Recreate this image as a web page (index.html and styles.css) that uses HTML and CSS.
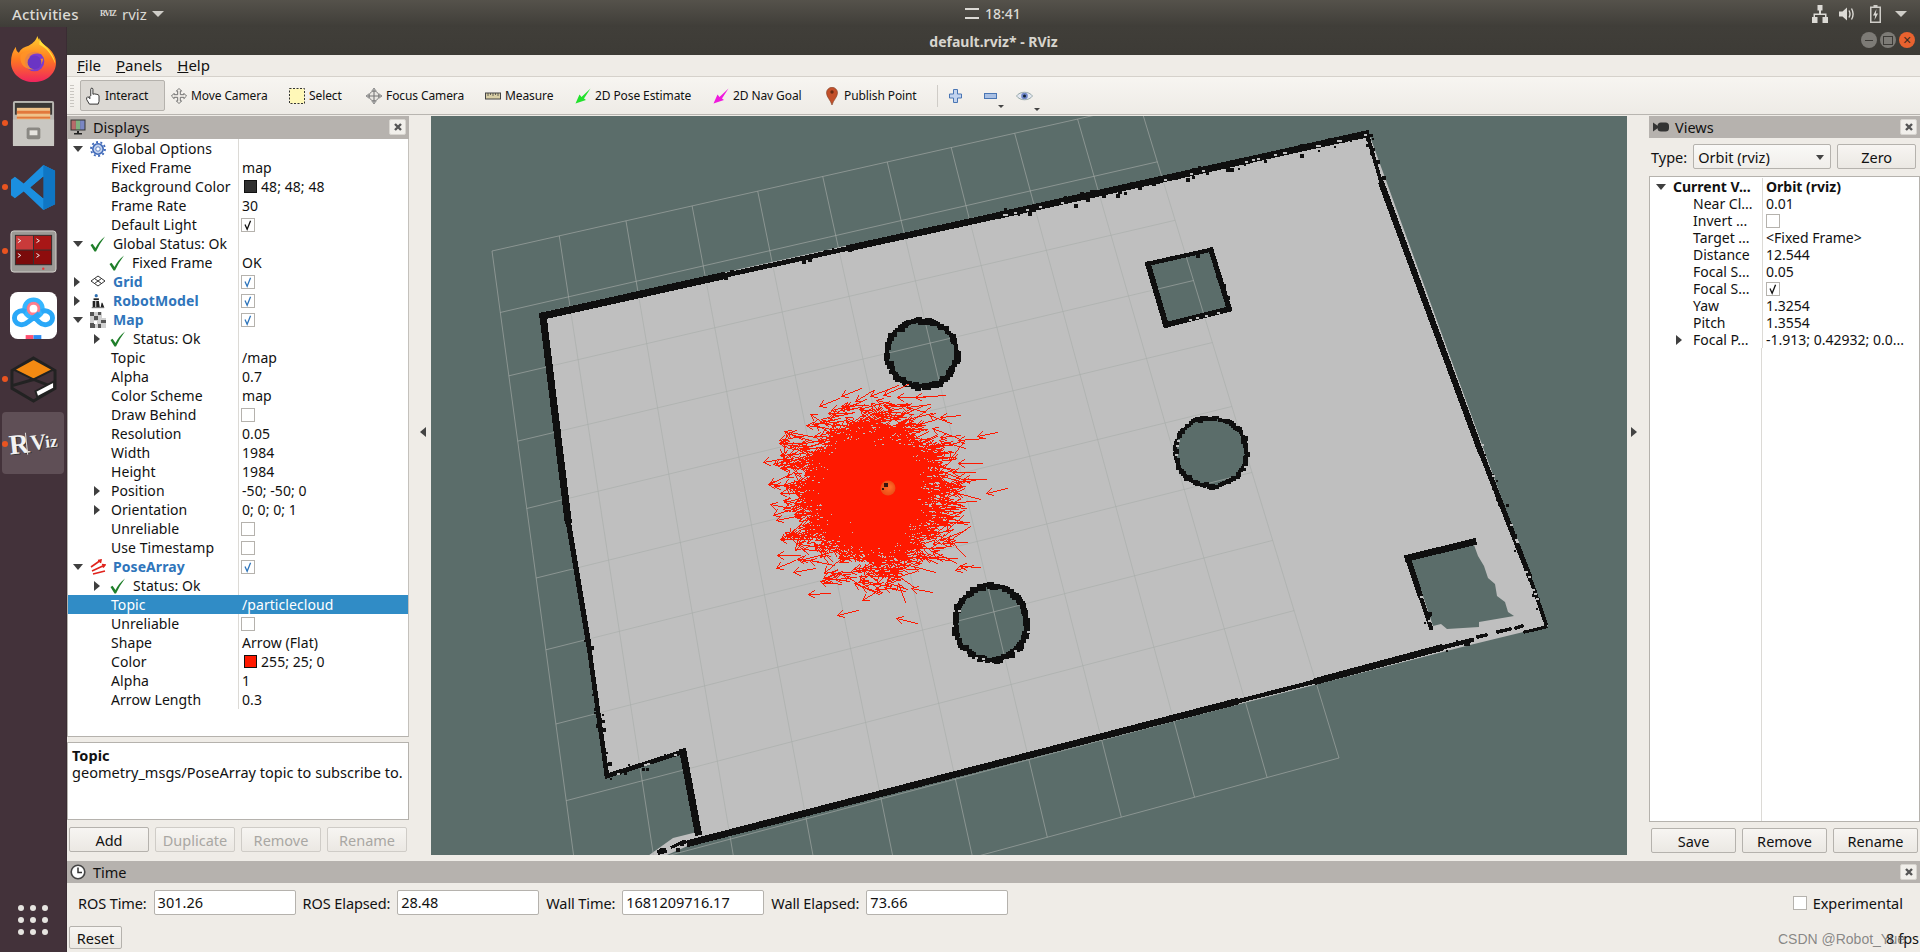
FILE: index.html
```html
<!DOCTYPE html>
<html lang="en">
<head>
<meta charset="utf-8">
<title>default.rviz* - RViz</title>
<link rel="stylesheet" href="styles.css">
</head>
<body>
<svg class="defs" width="0" height="0" aria-hidden="true">
  <defs>
    <symbol id="chk" viewBox="0 0 14 14"><path d="M3.5 6.5 L6 12 L10 2" fill="none" stroke="currentColor" stroke-width="1.5"/></symbol>
    <symbol id="ok" viewBox="0 0 18 18"><path d="M1.5 10 L3.5 8.8 L6.5 13 Q10 6 16 1.5 Q11 8 7 16.5 L5.5 16.5 Z" fill="#1f7f2a"/></symbol>
    <symbol id="gear" viewBox="0 0 16 16"><circle cx="8" cy="8" r="5.2" fill="#c4d3ee" stroke="#3e68b8" stroke-width="1.6"/><circle cx="8" cy="8" r="7" fill="none" stroke="#3e68b8" stroke-width="1.8" stroke-dasharray="2 2.4"/><circle cx="8" cy="8" r="2.2" fill="#fff" stroke="#5a7fc4"/></symbol>
    <symbol id="gridic" viewBox="0 0 16 16"><path d="M8 2 L15 7 L8 12 L1 7 Z M4.5 4.5 L11.5 9.5 M11.5 4.5 L4.5 9.5" fill="#fff" stroke="#333" stroke-width="1"/></symbol>
    <symbol id="robot" viewBox="0 0 16 18"><circle cx="6" cy="3" r="1.8" fill="#2f6fb0"/><path d="M3 6h6v2H3z" fill="#222"/><path d="M2 16V9h3v7zM6 16V9h3l1 7zM11 16l1-5 1 0 2 5" fill="#222"/><path d="M1 16.5h14" stroke="#555"/></symbol>
    <symbol id="mapic" viewBox="0 0 16 16"><rect width="16" height="16" fill="#d0d0d0"/><path d="M0 0h4v4H0zM8 0h3v3H8zM4 4h4v4H4zM11 8h5v3h-5zM0 11h5v5H0zM8 12h3v4H8z" fill="#555"/><path d="M12 0h4v6h-4zM4 9h3v3H4z" fill="#fff"/></symbol>
    <symbol id="poseic" viewBox="0 0 16 16"><path d="M1 8 L11 1 M8 1.5l3-.5-.6 3M2 12 L15 6 M12 5.5l3 .5-2 2.5M3 15 L15 12" fill="none" stroke="#e0231c" stroke-width="1.6"/></symbol>
    <symbol id="mon" viewBox="0 0 16 16"><rect x=".5" y=".5" width="15" height="11" fill="#333"/><rect x="1.5" y="1.5" width="4.4" height="9" fill="#b76a6a"/><rect x="5.9" y="1.5" width="4.2" height="9" fill="#7fb07f"/><rect x="10.1" y="1.5" width="4.4" height="9" fill="#7a86c4"/><path d="M7 12h2v2h3v1.500H4V14h3z" fill="#222"/></symbol>
    <symbol id="clock" viewBox="0 0 16 16"><circle cx="8" cy="8" r="6.8" fill="#fff" stroke="#444" stroke-width="1.6"/><path d="M8 3.500V8.500H12" fill="none" stroke="#333" stroke-width="1.500"/></symbol>
    <symbol id="cam" viewBox="0 0 16 12"><path d="M0 1.500L5 5V7L0 10.500Z" fill="#333"/><rect x="4.500" y="1.500" width="11.500" height="9" rx="3.500" fill="#333"/></symbol>
    <symbol id="x" viewBox="0 0 10 10"><path d="M2 2 L8 8 M8 2 L2 8" stroke="#555" stroke-width="2.400"/></symbol>
    <symbol id="hand" viewBox="0 0 17 20"><path d="M6 10V2.500a1.200 1.200 0 0 1 2.400 0V8l1.800-.3 1.800.3 2 .5 1.200 1V16l-1 3H4.500L1.500 14v-2l1-1 1.500.500L5 13V10" fill="#fff" stroke="#222"/></symbol>
    <symbol id="movecam" viewBox="0 0 18 18"><path d="M9 0.500 L12 3.500H10.500V7.500H14.500V6L17.500 9 14.500 12V10.500H10.500V14.500H12L9 17.500 6 14.500H7.500V10.500H3.500V12L.5 9 3.500 6V7.500H7.500V3.500H6Z" fill="#f1eee9" stroke="#666"/></symbol>
    <symbol id="selic" viewBox="0 0 16 16"><rect x=".5" y=".5" width="15" height="15" fill="#fff8b8" stroke="#333" stroke-dasharray="2 1.500"/></symbol>
    <symbol id="focus" viewBox="0 0 18 18"><circle cx="9" cy="9" r="5.500" fill="#e8e6e2" stroke="#777"/><path d="M9 0V18M0 9H18" stroke="#777" stroke-width="1.200"/><path d="M9 0l2.500 3h-5zM9 18l2.500-3h-5zM0 9l3-2.500v5zM18 9l-3-2.500v5z" fill="#aaa" stroke="#777" stroke-width=".5"/></symbol>
    <symbol id="ruler" viewBox="0 0 16 8"><rect x=".5" y="1" width="15" height="6" fill="#d9cfa6" stroke="#444"/><path d="M3 1v3M5.500 1v2M8 1v3M10.500 1v2M13 1v3" stroke="#444" stroke-width=".8"/></symbol>
    <symbol id="pose" viewBox="0 0 16 16"><path d="M0.500 15.500 L4.500 6.500 L6.500 9 L15.500 .5 L9 10.500 L11 12 Z" fill="#22e12c"/></symbol>
    <symbol id="nav" viewBox="0 0 16 16"><path d="M0.500 15.500 L4.500 6.500 L6.500 9 L15.500 .5 L9 10.500 L11 12 Z" fill="#ef19dd"/></symbol>
    <symbol id="pin" viewBox="0 0 12 18"><path d="M6 18 C4.500 13 .5 10 .5 5.800 A5.500 5.500 0 0 1 11.500 5.800 C11.500 10 7.500 13 6 18Z" fill="#c2502a" stroke="#7d3a1e" stroke-width=".6"/><circle cx="6" cy="5" r="1.700" fill="#6b2c14"/></symbol>
    <symbol id="plus" viewBox="0 0 13 14"><path d="M4.500.5h4v4.500h4v4h-4v4.500h-4V9h-4V5h4z" fill="#c2d3ee" stroke="#4a76b4"/></symbol>
    <symbol id="minus" viewBox="0 0 13 6"><rect x=".5" y=".5" width="12" height="5" fill="#a9c0e4" stroke="#4a76b4"/></symbol>
    <symbol id="eye" viewBox="0 0 17 12"><path d="M.5 6C4 1 13 1 16.500 6 13 11 4 11 .5 6Z" fill="#e4e8f1" stroke="#9aa"/><circle cx="8.500" cy="6" r="3.300" fill="#6f86c8"/><circle cx="8.500" cy="6" r="1.500" fill="#123"/></symbol>
    <symbol id="net" viewBox="0 0 16 18"><path d="M5.500 0h5v5.500H9V8.500h5.500V12H16v6h-5.500v-6H13V10H3v2h2.500v6H0v-6h1.500V8.500H7V5.500H5.500Z" fill="#dcdad5"/></symbol>
    <symbol id="vol" viewBox="0 0 16 16"><path d="M0 5.500h3.500L8 1.500v13L3.500 10.500H0Z" fill="#dcdad5"/><path d="M10 4.500q2 3.500 0 7M12.500 2.500q3.200 5.500 0 11" fill="none" stroke="#dcdad5" stroke-width="1.400"/></symbol>
    <symbol id="bat" viewBox="0 0 11 18"><path d="M3.500 0h4v1.500H11V18H0V1.500h3.500Z M1.500 3V16.500h8V3Z" fill="#cfcdc8" fill-rule="evenodd"/><path d="M6.500 4 L3 10.500h2.200L4.500 15 8 8.500H5.800Z" fill="#dcdad5"/></symbol>
  </defs>
</svg>

<div class="screen">
  <header class="topbar">
    <div class="top-left">
      <span class="activities">Activities</span>
      <span class="app-logo">RVIZ</span>
      <span class="app-name">rviz</span>
      <span class="tri tri-top"></span>
    </div>
    <div class="top-clock"><span class="notif"></span><span>18:41</span></div>
    <div class="top-right">
      <svg class="s-net"><use href="#net"/></svg>
      <svg class="s-vol"><use href="#vol"/></svg>
      <svg class="s-bat"><use href="#bat"/></svg>
      <span class="tri tri-top"></span>
    </div>
  </header>

  <div class="below">
    <nav class="dock">
      <div class="dock-item"><svg class="dock-svg" viewBox="0 0 48 48">
        <defs><linearGradient id="ff" x1="0" y1="0" x2="0" y2="1"><stop offset="0" stop-color="#ffd030"/><stop offset=".5" stop-color="#ff7a1f"/><stop offset="1" stop-color="#f0245e"/></linearGradient></defs>
        <path d="M28 0c1 6 8 9 12 13 4 4 7 9 7 14 0 12-10 20-23 20S1 38 1 27C1 20 3 15 6 11c0 3 1 5 3 6 2-4 6-6 10-7 3-2 7-4 9-10Z" fill="url(#ff)"/>
        <path d="M30 2c2 6 8 9 11 14 3 4 5 8 5 12-4-10-9-16-16-19Z" fill="#ffe03a"/>
        <circle cx="25" cy="26" r="10" fill="#7b3ccf"/><path d="M11 19c6-5 16-6 22 0-5-2-10-1-13 2 1 3 7 3 14 2-1 8-8 12-14 11-6-1-11-7-9-15Z" fill="#ff9327" opacity=".85"/>
        <circle cx="25" cy="27" r="7" fill="#6a35c4"/></svg></div>
      <div class="dock-item"><i class="run"></i><svg class="dock-svg" viewBox="0 0 48 48">
        <rect x="3" y="1" width="42" height="46" rx="2" fill="#b9b7b2"/><rect x="5" y="3" width="38" height="12" fill="#3a3836"/>
        <rect x="7" y="8" width="34" height="12" fill="#f0c28a"/><rect x="7" y="11" width="34" height="3" fill="#e2783c"/><rect x="7" y="17" width="34" height="2" fill="#e2783c"/>
        <rect x="3" y="20" width="42" height="27" fill="#c9c7c2"/><rect x="17" y="28" width="14" height="12" rx="2" fill="#8a8883"/><rect x="20" y="31" width="8" height="5" fill="#e6e4df"/></svg></div>
      <div class="dock-item"><i class="run"></i><svg class="dock-svg" viewBox="0 0 48 48">
        <path d="M34 1 L46 7 V41 L34 47 L14 28 L5 35 L1 32 V16 L5 13 L14 20Z M34 13 L21 24 L34 35Z" fill="#1b8fe0" fill-rule="evenodd"/><path d="M34 1 L46 7 V41 L34 47Z M34 13V35L34 47" fill="#0f76c4"/><path d="M34 13 L21 24 L34 35Z" fill="#43323a"/></svg></div>
      <div class="dock-item"><i class="run"></i><svg class="dock-svg" viewBox="0 0 48 44">
        <rect x="1" y="1" width="46" height="42" rx="3" fill="#9c9a96" stroke="#d6d4cf"/>
        <rect x="5" y="5" width="38" height="31" fill="#333"/><rect x="6" y="6" width="17.500" height="14" fill="#c93a3a"/><rect x="24.500" y="6" width="17.500" height="14" fill="#a81616"/><rect x="6" y="21" width="17.500" height="14" fill="#7a0b0b"/><rect x="24.500" y="21" width="17.500" height="14" fill="#8e0d0d"/>
        <path d="M8 9l3 2-3 2M27 9l3 2-3 2M8 24l3 2-3 2M27 24l3 2-3 2" fill="none" stroke="#eee"/><circle cx="34" cy="39.500" r="1.200" fill="#e33"/></svg></div>
      <div class="dock-item"><svg class="dock-svg" viewBox="0 0 48 48">
        <rect x="0" y="0" width="48" height="48" rx="8" fill="#fff"/><rect x="16" y="44" width="8" height="4" fill="#ff4f6f"/><rect x="24" y="44" width="8" height="4" fill="#2b8bf2"/>
        <circle cx="24" cy="17" r="9" fill="none" stroke="#36b6ff" stroke-width="5"/><circle cx="24" cy="17" r="7" fill="#ff6f7f" opacity=".9"/><circle cx="24" cy="17" r="4" fill="#fff"/>
        <path d="M16 20c-7-3-13 3-11 9 2 5 9 6 13 2l12-9M32 20c7-3 13 3 11 9-2 5-9 6-13 2l-6-6" fill="none" stroke="#2aa8f8" stroke-width="5"/></svg></div>
      <div class="dock-item"><i class="run"></i><svg class="dock-svg" viewBox="0 0 48 48">
        <path d="M24 2 L46 15 V33 L24 46 L2 33 V15 Z" fill="none" stroke="#222" stroke-width="3"/><path d="M24 3 L44 14 L24 24 L4 14Z" fill="#f48a12" stroke="#222" stroke-width="2"/>
        <path d="M3 30 L24 24 M24 24 L45 32" stroke="#222" stroke-width="3"/><path d="M26 36 L45 26 V33 L28 42Z" fill="#fff" stroke="#222" stroke-width="2"/></svg></div>
      <div class="dock-item active"><i class="run"></i><span class="rviz-logo"><b>R</b><b class="v">V</b><b class="iz">iz</b></span></div>
      <div class="dock-grow"></div>
      <div class="apps"><i></i><i></i><i></i><i></i><i></i><i></i><i></i><i></i><i></i></div>
    </nav>

    <main class="window">
      <div class="titlebar">
        <span class="win-title">default.rviz* - RViz</span>
        <div class="win-btns">
          <span class="wb wb-min"></span><span class="wb wb-max"></span><span class="wb wb-close">×</span>
        </div>
      </div>
      <div class="menubar"><span><u>F</u>ile</span><span><u>P</u>anels</span><span><u>H</u>elp</span></div>
      <div class="toolbar">
        <i class="handle"></i>
        <div class="tools">
          <div class="tool on"><svg class="t-i"><use href="#hand"/></svg>Interact</div>
          <div class="tool"><svg class="t-i"><use href="#movecam"/></svg>Move Camera</div>
          <div class="tool"><svg class="t-i"><use href="#selic"/></svg>Select</div>
          <div class="tool"><svg class="t-i"><use href="#focus"/></svg>Focus Camera</div>
          <div class="tool"><svg class="t-i t-r"><use href="#ruler"/></svg>Measure</div>
          <div class="tool"><svg class="t-i"><use href="#pose"/></svg>2D Pose Estimate</div>
          <div class="tool"><svg class="t-i"><use href="#nav"/></svg>2D Nav Goal</div>
          <div class="tool"><svg class="t-i t-p"><use href="#pin"/></svg>Publish Point</div>
        </div>
        <i class="tsep"></i>
        <svg class="tb-plus"><use href="#plus"/></svg>
        <span class="tb-drop"><svg class="tb-minus"><use href="#minus"/></svg><i class="tri tri-sm"></i></span>
        <span class="tb-drop"><svg class="tb-eye"><use href="#eye"/></svg><i class="tri tri-sm"></i></span>
      </div>

      <div class="content">
        <section class="panel displays">
          <div class="ptitle"><svg class="p-i"><use href="#mon"/></svg><span>Displays</span><span class="pclose"><svg><use href="#x"/></svg></span></div>
          <div class="tree">
            <div class="r"><div class="n d0"><i class="ex down"></i><svg class="ic"><use href="#gear"/></svg>Global Options</div><div class="v"></div></div>
            <div class="r"><div class="n d1">Fixed Frame</div><div class="v">map</div></div>
            <div class="r"><div class="n d1">Background Color</div><div class="v"><i class="sw sw-dark"></i>48; 48; 48</div></div>
            <div class="r"><div class="n d1">Frame Rate</div><div class="v">30</div></div>
            <div class="r"><div class="n d1">Default Light</div><div class="v"><span class="cb"><svg><use href="#chk"/></svg></span></div></div>
            <div class="r"><div class="n d0"><i class="ex down"></i><svg class="ic ic-ok"><use href="#ok"/></svg>Global Status: Ok</div><div class="v"></div></div>
            <div class="r"><div class="n d2"><svg class="ic ic-ok"><use href="#ok"/></svg>Fixed Frame</div><div class="v">OK</div></div>
            <div class="r"><div class="n d0 en"><i class="ex right"></i><svg class="ic"><use href="#gridic"/></svg>Grid</div><div class="v"><span class="cb blue"><svg><use href="#chk"/></svg></span></div></div>
            <div class="r"><div class="n d0 en"><i class="ex right"></i><svg class="ic"><use href="#robot"/></svg>RobotModel</div><div class="v"><span class="cb blue"><svg><use href="#chk"/></svg></span></div></div>
            <div class="r"><div class="n d0 en"><i class="ex down"></i><svg class="ic"><use href="#mapic"/></svg>Map</div><div class="v"><span class="cb blue"><svg><use href="#chk"/></svg></span></div></div>
            <div class="r"><div class="n d1x"><i class="ex right"></i><svg class="ic ic-ok"><use href="#ok"/></svg>Status: Ok</div><div class="v"></div></div>
            <div class="r"><div class="n d1">Topic</div><div class="v">/map</div></div>
            <div class="r"><div class="n d1">Alpha</div><div class="v">0.7</div></div>
            <div class="r"><div class="n d1">Color Scheme</div><div class="v">map</div></div>
            <div class="r"><div class="n d1">Draw Behind</div><div class="v"><span class="cb"></span></div></div>
            <div class="r"><div class="n d1">Resolution</div><div class="v">0.05</div></div>
            <div class="r"><div class="n d1">Width</div><div class="v">1984</div></div>
            <div class="r"><div class="n d1">Height</div><div class="v">1984</div></div>
            <div class="r"><div class="n d1e"><i class="ex right"></i>Position</div><div class="v">-50; -50; 0</div></div>
            <div class="r"><div class="n d1e"><i class="ex right"></i>Orientation</div><div class="v">0; 0; 0; 1</div></div>
            <div class="r"><div class="n d1">Unreliable</div><div class="v"><span class="cb"></span></div></div>
            <div class="r"><div class="n d1">Use Timestamp</div><div class="v"><span class="cb"></span></div></div>
            <div class="r"><div class="n d0 en"><i class="ex down"></i><svg class="ic"><use href="#poseic"/></svg>PoseArray</div><div class="v"><span class="cb blue"><svg><use href="#chk"/></svg></span></div></div>
            <div class="r"><div class="n d1x"><i class="ex right"></i><svg class="ic ic-ok"><use href="#ok"/></svg>Status: Ok</div><div class="v"></div></div>
            <div class="r sel"><div class="n d1">Topic</div><div class="v">/particlecloud</div></div>
            <div class="r"><div class="n d1">Unreliable</div><div class="v"><span class="cb"></span></div></div>
            <div class="r"><div class="n d1">Shape</div><div class="v">Arrow (Flat)</div></div>
            <div class="r"><div class="n d1">Color</div><div class="v"><i class="sw sw-red"></i>255; 25; 0</div></div>
            <div class="r"><div class="n d1">Alpha</div><div class="v">1</div></div>
            <div class="r"><div class="n d1">Arrow Length</div><div class="v">0.3</div></div>
          </div>
          <div class="vsplit"></div>
          <div class="help"><b>Topic</b><br>geometry_msgs/PoseArray topic to subscribe to.</div>
          <div class="btns">
            <span class="btn">Add</span><span class="btn off">Duplicate</span><span class="btn off">Remove</span><span class="btn off">Rename</span>
          </div>
        </section>

        <div class="hsplit left"><i class="tri tri-left"></i></div>
        <canvas id="view" class="viewport" width="1196" height="739"></canvas>
        <div class="hsplit right"><i class="tri tri-right"></i></div>

        <section class="panel views">
          <div class="ptitle small"><svg class="p-c"><use href="#cam"/></svg><span>Views</span><span class="pclose"><svg><use href="#x"/></svg></span></div>
          <div class="typerow"><span>Type:</span><span class="combo">Orbit (rviz)<i class="tri tri-combo"></i></span><span class="btn zero">Zero</span></div>
          <div class="vtree">
            <div class="vr head"><div class="vn vn0"><i class="ex down"></i>Current V...</div><div class="vv">Orbit (rviz)</div></div>
            <div class="vr"><div class="vn">Near Cl...</div><div class="vv">0.01</div></div>
            <div class="vr"><div class="vn">Invert ...</div><div class="vv"><span class="cb"></span></div></div>
            <div class="vr"><div class="vn">Target ...</div><div class="vv">&lt;Fixed Frame&gt;</div></div>
            <div class="vr"><div class="vn">Distance</div><div class="vv">12.544</div></div>
            <div class="vr"><div class="vn">Focal S...</div><div class="vv">0.05</div></div>
            <div class="vr"><div class="vn">Focal S...</div><div class="vv"><span class="cb"><svg><use href="#chk"/></svg></span></div></div>
            <div class="vr"><div class="vn">Yaw</div><div class="vv">1.3254</div></div>
            <div class="vr"><div class="vn">Pitch</div><div class="vv">1.3554</div></div>
            <div class="vr"><div class="vn vnx"><i class="ex right"></i>Focal P...</div><div class="vv">-1.913; 0.42932; 0.0...</div></div>
            <div class="vfill"><div class="vfill-l"></div></div>
          </div>
          <div class="btns vbtns"><span class="btn">Save</span><span class="btn">Remove</span><span class="btn">Rename</span></div>
        </section>
      </div>

      <section class="time">
        <div class="ptitle ttitle"><svg class="p-i"><use href="#clock"/></svg><span>Time</span><span class="pclose"><svg><use href="#x"/></svg></span></div>
        <div class="timerow">
          <span class="tl">ROS Time:</span><span class="inp w1">301.26</span>
          <span class="tl">ROS Elapsed:</span><span class="inp w1">28.48</span>
          <span class="tl">Wall Time:</span><span class="inp w1">1681209716.17</span>
          <span class="tl">Wall Elapsed:</span><span class="inp w1">73.66</span>
          <span class="exp"><span class="cb"></span>Experimental</span>
        </div>
        <div class="resetrow"><span class="btn reset">Reset</span><span class="fps">8 fps</span></div>
        <span class="wm">CSDN @Robot_Yue</span>
      </section>
    </main>
  </div>
</div>
<script src="app.js"></script>
</body>
</html>
```
FILE: styles.css
```css
* { box-sizing: border-box; }
html, body { margin: 0; height: 100%; overflow: hidden; background: #efece7; }
body { font-family: "Noto Sans", "DejaVu Sans", sans-serif; font-size: 14px; color: #111; }
.defs { position: absolute; }
.screen { width: 1920px; height: 952px; display: flex; flex-direction: column; }
i { display: block; font-style: normal; }

/* top bar */
.topbar { height: 27px; flex: none; display: flex; align-items: center; background: linear-gradient(#55524b, #3f3d38); color: #dcdad5; font-size: 14px; }
.top-left { width: 965px; display: flex; align-items: center; }
.activities { margin-left: 12px; width: 88px; font-weight: 500; font-size: 15px; letter-spacing: .2px; }
.app-logo { width: 22px; font: bold 8px "Liberation Serif", serif; color: #dcdad5; letter-spacing: -1px; }
.app-name { width: 30px; font-size: 15px; }
.top-clock { display: flex; align-items: center; gap: 6px; font-size: 14px; font-weight: 500; }
.notif { width: 14px; height: 11px; border-top: 2px solid #dcdad5; border-bottom: 2px solid #dcdad5; }
.top-right { margin-left: auto; display: flex; align-items: center; padding-right: 13px; }
.s-net { width: 16px; height: 18px; margin-right: 11px; }
.s-vol { width: 16px; height: 16px; margin-right: 15px; }
.s-bat { width: 11px; height: 18px; margin-right: 14px; }
.tri { width: 0; height: 0; border-style: solid; border-color: transparent; }
.tri-top { border-width: 6px 6px 0; border-top-color: #cfcdc8; }

/* dock */
.below { flex: 1; display: flex; min-height: 0; }
.dock { width: 67px; flex: none; background: #43323a; display: flex; flex-direction: column; border-right: 1px solid #3a2c33; }
.dock-item { position: relative; height: 64px; flex: none; display: flex; align-items: center; justify-content: center; }
.dock-svg { width: 47px; height: 47px; }
.run { position: absolute; left: 2px; top: 29px; width: 6px; height: 6px; border-radius: 50%; background: #e95420; }
.dock-item.active { width: 62px; height: 62px; margin: 1px 0 0 2px; background: #5f4f56; border-radius: 4px; }
.dock-item.active .run { left: 0; }
.rviz-logo { font-family: "Liberation Serif", serif; color: #f2f2f2; transform: rotate(-6deg); line-height: 1; text-shadow: 1px 1px 0 #333; display: flex; align-items: center; }
.rviz-logo b { font-size: 28px; }
.rviz-logo .v { font-size: 22px; margin-left: -3px; }
.rviz-logo .iz { font-size: 17px; margin-left: -1px; }
.dock-grow { flex: 1; }
.apps { display: grid; grid-template-columns: repeat(3, 6px); gap: 6px; margin: 0 0 17px 18px; }
.apps i { width: 6px; height: 6px; border-radius: 50%; background: #e6e4e0; }

/* window chrome */
.window { flex: 1; min-width: 0; display: flex; flex-direction: column; position: relative; }
.titlebar { height: 28px; flex: none; background: linear-gradient(#403e39, #3d3b36); display: flex; align-items: center; justify-content: center; position: relative; color: #d8d5ce; font-weight: 700; font-size: 14px; }
.win-btns { position: absolute; right: 5px; top: 5px; display: flex; gap: 3px; }
.wb { width: 16px; height: 16px; border-radius: 50%; background: #7d7b76; display: flex; align-items: center; justify-content: center; color: #3c2a20; font: 400 14px/16px "Liberation Sans", sans-serif; }
.wb-min::after { content: ""; width: 8px; height: 1px; background: #3c3a36; }
.wb-max::after { content: ""; width: 8px; height: 7px; border: 1px solid #3c3a36; }
.wb-close { background: #e9622f; }
.menubar { height: 22px; flex: none; background: #efece7; border-bottom: 1px solid #d5d1cb; display: flex; gap: 15px; padding: 0 0 0 10px; font-size: 15px; line-height: 20px; }
.toolbar { height: 38px; flex: none; background: linear-gradient(#f7f5f1, #eeebe6); border-bottom: 1px solid #b8b5b0; display: flex; align-items: center; margin-bottom: 1px; font-size: 12px; }
.handle { width: 4px; height: 22px; margin: 0 6px 0 3px; background: repeating-linear-gradient(#c9c6c1 0 1px, transparent 1px 3px); }
.tools { display: grid; grid-template-columns: 86px 118px 77px 119px 90px 138px 111px 115px; }
.tool { height: 31px; display: flex; align-items: center; padding-left: 5px; gap: 4px; white-space: nowrap; letter-spacing: -.1px; }
.tool.on { background: #dcd9d4; border: 1px solid #b5b2ad; border-radius: 2px; width: 85px; padding-left: 4px; }
.t-i { width: 16px; height: 18px; flex: none; }
.t-r { height: 8px; }
.tsep { width: 1px; height: 22px; background: #cfccc7; margin-left: 3px; }
.tb-plus { width: 13px; height: 14px; margin-left: 11px; }
.tb-drop { position: relative; display: flex; align-items: center; margin-left: 22px; }
.tb-minus { width: 13px; height: 6px; }
.tb-eye { width: 17px; height: 12px; margin-left: -3px; }
.tri-sm { position: absolute; right: -7px; bottom: -9px; border-width: 3px 3px 0; border-top-color: #444; }

/* panels */
.content { height: 739px; flex: none; display: flex; background: #efece7; }
.panel { display: flex; flex-direction: column; flex: none; }
.displays { width: 342px; }
.ptitle { height: 23px; flex: none; background: #b6b2ae; display: flex; align-items: center; padding: 0 0 1px 3px; font-size: 14.5px; position: relative; }
.ptitle.small { height: 22px; padding-bottom: 0; }
.p-i { width: 16px; height: 16px; margin-right: 7px; }
.p-c { width: 16px; height: 12px; margin: 0 6px 0 1px; }
.pclose { position: absolute; right: 3px; top: 3px; width: 17px; height: 16px; background: #f1efeb; border: 1px solid #d8d5d0; border-radius: 2px; display: flex; align-items: center; justify-content: center; }
.pclose svg { width: 10px; height: 10px; }
.tree { flex: 1; background: #fff; border: 1px solid #b5b2ad; border-top: 0; border-right-color: #c4c1bc; overflow: hidden; }
.r { display: grid; grid-template-columns: 170px 1fr; height: 19px; line-height: 19px; white-space: nowrap; letter-spacing: .07px; }
.n { display: flex; align-items: center; position: relative; }
.v { display: flex; align-items: center; padding-left: 3px; border-left: 1px solid #dcdad6; }
.v .cb { margin-left: -1px; }
.d0 { padding-left: 4px; }
.d1 { padding-left: 43px; }
.d2 { padding-left: 41px; }
.d1x { padding-left: 24px; }
.d1e { padding-left: 24px; }
.d1e .ex { margin-right: 1px; }
.en { color: #2f75bb; font-weight: 700; }
.ex { width: 18px; height: 10px; flex: none; position: relative; }
.ex::after { content: ""; position: absolute; border-style: solid; border-color: transparent; }
.ex.down::after { left: 1px; top: 2px; border-width: 6px 5px 0; border-top-color: #3f3f3f; }
.ex.right::after { left: 2px; top: 0; border-width: 5px 0 5px 6px; border-left-color: #3f3f3f; }
.ic { width: 16px; height: 16px; flex: none; margin: 0 7px 0 0; }
.ic-ok { width: 18px; height: 18px; margin: 0 6px 0 -1px; }
.cb { width: 14px; height: 14px; border: 1px solid #b5b2ad; background: #fff; display: inline-block; flex: none; color: #111; }
.cb svg { display: block; width: 12px; height: 12px; }
.cb.blue { color: #2f75bb; }
.sw { width: 13px; height: 13px; border: 1px solid #111; margin: 0 4px 0 2px; flex: none; }
.sw-dark { background: #303030; }
.sw-red { background: #ff1900; }
.sel { background: #308cc6; color: #fff; }
.sel .v { border-left-color: #308cc6; }
.vsplit { height: 5px; flex: none; }
.help { height: 78px; flex: none; background: #fff; border: 1px solid #b5b2ad; padding: 4px 4px; line-height: 17px; font-size: 14.5px; white-space: nowrap; letter-spacing: .02px; }
.btns { height: 35px; flex: none; display: flex; align-items: flex-start; gap: 6px; padding: 7px 0 0 2px; }
.btn { width: 80px; height: 25px; background: linear-gradient(#f7f5f2, #ebe8e3); border: 1px solid #b5b2ad; border-radius: 2px; display: flex; align-items: center; justify-content: center; font-size: 14.5px; flex: none; }
.btn.off { color: #a9a7a3; border-color: #cfccc7; }
.hsplit { width: 22px; flex: none; display: flex; align-items: center; position: relative; }
.hsplit.left { padding: 0 0 108px 11px; justify-content: flex-start; }
.hsplit.right { padding: 0 0 108px 4px; }
.tri-left { border-width: 5px 6px 5px 0; border-right-color: #444; }
.tri-right { border-width: 5px 0 5px 6px; border-left-color: #444; }
.viewport { width: 1196px; height: 739px; flex: none; display: block; background: #5b6d6a; }
.views { width: 271px; }
.typerow { height: 38px; flex: none; display: flex; align-items: center; padding: 6px 2px 7px 2px; font-size: 14.5px; }
.combo { width: 138px; height: 25px; margin-left: 6px; border: 1px solid #b5b2ad; border-radius: 2px; background: linear-gradient(#faf9f7, #f0eeea); display: flex; align-items: center; padding-left: 4px; position: relative; }
.tri-combo { position: absolute; right: 6px; top: 10px; border-width: 5px 4px 0; border-top-color: #444; }
.zero { width: 79px; margin-left: 6px; }
.vtree { flex: 1; background: #fff; border: 1px solid #b5b2ad; display: flex; flex-direction: column; padding-top: 1px; overflow: hidden; }
.vr { display: grid; grid-template-columns: 112px 1fr; height: 17px; line-height: 17px; flex: none; white-space: nowrap; font-size: 14px; letter-spacing: 0; }
.vn { padding-left: 43px; display: flex; align-items: center; }
.vn0 { padding-left: 5px; }
.vnx { padding-left: 24px; }
.vnx .ex { width: 19px; }
.vv { border-left: 1px solid #dcdad6; padding-left: 3px; display: flex; align-items: center; overflow: hidden; }
.head { font-weight: 700; }
.vfill { flex: 1; display: grid; grid-template-columns: 112px 1fr; }
.vfill-l { border-right: 1px solid #dcdad6; }
.vbtns { gap: 6px; padding-top: 6px; height: 33px; }
.vbtns .btn { width: 85px; }

/* time */
.time { position: relative; margin-top: 6px; flex: 1; display: flex; flex-direction: column; }
.ttitle { height: 22px; }
.timerow { display: flex; align-items: center; height: 25px; margin-top: 7px; padding-left: 11px; font-size: 14.5px; }
.tl { margin-right: 7px; white-space: nowrap; letter-spacing: -.1px; }
.inp { height: 25px; background: #fff; border: 1px solid #b5b2ad; border-radius: 2px; padding-left: 3px; line-height: 22px; margin-right: 7px; }
.w1 { width: 142px; }
.exp { margin-left: auto; margin-right: 17px; display: flex; align-items: center; gap: 6px; }
.resetrow { display: flex; align-items: center; justify-content: space-between; padding: 11px 1px 0 2px; }
.reset { width: 53px; height: 23px; }
.fps { font-size: 14.5px; }
.wm { position: absolute; right: 15px; bottom: 5px; font: 14px "Liberation Sans", sans-serif; color: rgba(90, 90, 90, .7); }
```
FILE: app.js
```js
(function () {
  var cv = document.getElementById('view');
  var ctx = cv.getContext('2d');
  var OX = 431, OY = 116, W = cv.width, H = cv.height;
  var BG = '#5b6d6a', MAP = '#bfbfbf', WALL = '#0f0f0f';

  var seed = 12345;
  function rnd() {
    seed = (seed + 0x6D2B79F5) | 0;
    var t = Math.imul(seed ^ (seed >>> 15), 1 | seed);
    t = (t + Math.imul(t ^ (t >>> 7), 61 | t)) ^ t;
    return ((t ^ (t >>> 14)) >>> 0) / 4294967296;
  }
  function gauss() { return Math.sqrt(-2 * Math.log(rnd() + 1e-9)) * Math.cos(6.28318 * rnd()); }

  function poly(c, pts, fill) {
    c.beginPath();
    pts.forEach(function (p, i) { if (i) c.lineTo(p[0], p[1]); else c.moveTo(p[0], p[1]); });
    c.closePath();
    c.fillStyle = fill;
    c.fill();
  }

  ctx.translate(-OX, -OY);
  ctx.fillStyle = BG;
  ctx.fillRect(OX, OY, W, H);

  // free space of the map
  poly(ctx, [[540, 313], [1368, 131], [1548, 626], [1470, 645], [690, 845], [660, 858], [645, 858], [673, 838], [697, 832], [682, 752], [607, 776]], MAP);

  // unknown pockets
  poly(ctx, [[1145, 263], [1211, 248], [1231, 310], [1164, 327]], BG);
  var inner = [[1411, 560], [1474, 545], [1478, 556], [1484, 566], [1488, 578], [1495, 584], [1497, 596], [1505, 602], [1508, 612], [1514, 616], [1479, 622], [1479, 627], [1447, 629], [1441, 624], [1433, 626]];
  poly(ctx, inner, BG);
  [[922, 354, 36, 34], [1211, 452, 37, 35], [991, 623, 37, 38]].forEach(function (e) {
    ctx.beginPath();
    ctx.ellipse(e[0], e[1], e[2], e[3], 0, 0, 6.2832);
    ctx.fillStyle = BG;
    ctx.fill();
  });

  // grid, projected through the four corners of the 10 x 10 plane
  var P = [[492, 251], [1140, 105], [1339, 758], [588, 962]];
  function homography(q) {
    var dx1 = q[1][0] - q[2][0], dx2 = q[3][0] - q[2][0], sx = q[0][0] - q[1][0] + q[2][0] - q[3][0];
    var dy1 = q[1][1] - q[2][1], dy2 = q[3][1] - q[2][1], sy = q[0][1] - q[1][1] + q[2][1] - q[3][1];
    var d = dx1 * dy2 - dx2 * dy1;
    var g = (sx * dy2 - dx2 * sy) / d, h = (dx1 * sy - sx * dy1) / d;
    var a = q[1][0] - q[0][0] + g * q[1][0], b = q[3][0] - q[0][0] + h * q[3][0], c = q[0][0];
    var e = q[1][1] - q[0][1] + g * q[1][1], f = q[3][1] - q[0][1] + h * q[3][1], i = q[0][1];
    return function (u, v) {
      var w = g * u + h * v + 1;
      return [(a * u + b * v + c) / w, (e * u + f * v + i) / w];
    };
  }
  var H2 = homography(P);
  ctx.strokeStyle = 'rgba(168,172,170,.62)';
  ctx.lineWidth = 1;
  for (var k = 0; k <= 10; k++) {
    var a = H2(k / 10, 0), b = H2(k / 10, 1), c = H2(0, k / 10), d = H2(1, k / 10);
    ctx.beginPath(); ctx.moveTo(a[0], a[1]); ctx.lineTo(b[0], b[1]); ctx.stroke();
    ctx.beginPath(); ctx.moveTo(c[0], c[1]); ctx.lineTo(d[0], d[1]); ctx.stroke();
  }

  // walls go on their own layer, then get a hard threshold so edges stay pixelated
  var wl = document.createElement('canvas');
  wl.width = W; wl.height = H;
  var w = wl.getContext('2d');
  w.translate(-OX, -OY);
  w.strokeStyle = WALL;
  w.fillStyle = WALL;
  function block(x, y, s) { w.fillRect(Math.round(x / 2) * 2, Math.round(y / 2) * 2, s, s); }
  function wall(x0, y0, x1, y1, t, jag) {
    w.lineWidth = t;
    w.lineCap = 'square';
    w.beginPath(); w.moveTo(x0, y0); w.lineTo(x1, y1); w.stroke();
    if (!jag) return;
    var len = Math.hypot(x1 - x0, y1 - y0), nx = -(y1 - y0) / len, ny = (x1 - x0) / len;
    for (var s = 0; s < len; s += 3) {
      if (rnd() < jag) {
        var f = s / len, o = (rnd() - .5) * (t + 4);
        block(x0 + (x1 - x0) * f + nx * o, y0 + (y1 - y0) * f + ny * o, 2 + Math.floor(rnd() * 3));
      }
    }
  }
  var specks = [];
  function speck(x0, y0, x1, y1, n) {
    for (var i = 0; i < n; i++) {
      var f = rnd();
      specks.push([x0 + (x1 - x0) * f, y0 + (y1 - y0) * f]);
    }
  }
  // top
  wall(543, 316, 722, 276, 7);
  wall(722, 276, 850, 248, 4.5, .35);
  wall(850, 248, 1000, 215, 6.5);
  wall(1000, 215, 1366, 134, 6.5, .45);
  speck(1000, 215, 1366, 134, 20);
  // right
  wall(1367, 134, 1382, 185, 3.5, .6);
  wall(1382, 185, 1480, 450, 6);
  wall(1480, 450, 1529, 575, 5, .3);
  speck(1480, 440, 1530, 580, 6);
  wall(1529, 575, 1546, 624, 3.5, .5);
  speck(1525, 570, 1546, 624, 5);
  // left
  wall(543, 316, 568, 520, 7);
  wall(568, 520, 588, 640, 5);
  wall(588, 640, 607, 776, 4.5, .55);
  // notch
  wall(607, 776, 682, 752, 4.5, .5);
  speck(610, 775, 680, 752, 4);
  wall(683, 752, 698, 832, 7);
  // bottom
  wall(690, 843, 1235, 702, 6.5);
  wall(1235, 702, 1317, 681, 4);
  wall(1317, 681, 1440, 648, 6.5);
  wall(1440, 648, 1472, 640, 4, .5);
  [[1478, 637, 1486, 635], [1498, 632, 1510, 629], [1516, 628, 1522, 626]].forEach(function (s) { wall(s[0], s[1], s[2], s[3], 3.5); });
  wall(1525, 632, 1546, 627, 3);
  // scrap under the notch
  wall(660, 852, 664, 851, 5, .4);
  wall(672, 847, 683, 842, 3, .4);
  // square obstacle
  wall(1147, 264, 1210, 250, 4, .12);
  wall(1211, 250, 1229, 308, 5, .15);
  wall(1229, 309, 1166, 325, 5.5);
  speck(1229, 309, 1166, 325, 4);
  wall(1148, 264, 1166, 325, 5.5);
  // open box
  wall(1408, 558, 1473, 542, 6.5);
  wall(1408, 558, 1420, 595, 5.5);
  wall(1420, 595, 1431, 628, 4, .5);
  speck(1420, 595, 1431, 628, 2);
  // round obstacles
  [[922, 354, 35, 33, 5.5], [1211, 452, 36, 34, 4.5], [991, 623, 36, 37, 5.5]].forEach(function (e) {
    for (var a = 0; a < 6.2832; a += .07) {
      var o = (rnd() - .5) * 2.5;
      var x = e[0] + Math.cos(a) * (e[2] + o), y = e[1] + Math.sin(a) * (e[3] + o);
      var t = e[4] * (.6 + rnd() * .65);
      w.fillRect(Math.round(x - t / 2), Math.round(y - t / 2), Math.round(t), Math.round(t));
      if (rnd() < .035) specks.push([x, y]);
    }
  });

  var id = w.getImageData(0, 0, W, H);
  for (var p = 3; p < id.data.length; p += 4) {
    id.data[p] = id.data[p] > 110 ? 255 : 0;
    if (id.data[p]) { id.data[p - 3] = 15; id.data[p - 2] = 15; id.data[p - 1] = 15; }
  }
  w.putImageData(id, 0, 0);
  ctx.drawImage(wl, OX, OY);
  ctx.fillStyle = MAP;
  specks.forEach(function (s) { ctx.fillRect(Math.round(s[0]), Math.round(s[1]), 3, 2); });

  // particle cloud: aliased 1px arrows
  ctx.fillStyle = '#ff1900';
  function plot(x0, y0, x1, y1) {
    x0 = Math.round(x0); y0 = Math.round(y0); x1 = Math.round(x1); y1 = Math.round(y1);
    var dx = Math.abs(x1 - x0), dy = -Math.abs(y1 - y0), sx = x0 < x1 ? 1 : -1, sy = y0 < y1 ? 1 : -1, e = dx + dy;
    for (var g = 0; g < 400; g++) {
      ctx.fillRect(x0, y0, 1, 1);
      if (x0 === x1 && y0 === y1) break;
      var e2 = 2 * e;
      if (e2 >= dy) { e += dy; x0 += sx; }
      if (e2 <= dx) { e += dx; y0 += sy; }
    }
  }
  function arrow(hx, hy, tx, ty) {
    plot(tx, ty, hx, hy);
    var an = Math.atan2(ty - hy, tx - hx);
    plot(hx, hy, hx + 7 * Math.cos(an + .55), hy + 7 * Math.sin(an + .55));
    plot(hx, hy, hx + 7 * Math.cos(an - .55), hy + 7 * Math.sin(an - .55));
  }
  for (var n = 0; n < 2700; n++) {
    var gx = gauss(), gy = gauss();
    if (gx * gx + gy * gy > 9) continue;
    var hx = 864 + gx * 33, hy = 492 + gy * 34;
    var an = gauss() * .4 - .05;
    var len = 20 + rnd() * 8;
    arrow(hx, hy, hx + Math.cos(an) * len, hy + Math.sin(an) * len);
  }
  [
    [837, 615, 858, 610], [896, 618, 917, 623], [808, 594, 830, 593], [911, 588, 932, 592],
    [960, 566, 980, 567], [977, 436, 997, 432], [986, 493, 1007, 488], [963, 479, 986, 479],
    [842, 408, 860, 402], [870, 396, 898, 385], [793, 572, 815, 568], [784, 431, 802, 439],
    [779, 443, 800, 443], [763, 462, 785, 458], [774, 486, 796, 484], [770, 504, 790, 508],
    [776, 520, 796, 516], [777, 555, 800, 555], [776, 568, 795, 560], [823, 583, 840, 573],
    [862, 600, 880, 589], [884, 585, 902, 578], [955, 570, 973, 565], [940, 540, 965, 530],
    [952, 472, 975, 472], [958, 440, 985, 438], [940, 437, 960, 435], [897, 397, 925, 397],
    [900, 405, 925, 412], [940, 417, 960, 415], [915, 397, 945, 395], [958, 463, 982, 463]
  ].forEach(function (a) { arrow(a[0], a[1], a[2], a[3]); });

  // robot
  var gr = ctx.createRadialGradient(890, 487, 1, 888, 488, 8);
  gr.addColorStop(0, '#ff6a2a');
  gr.addColorStop(1, '#e84c14');
  ctx.fillStyle = gr;
  ctx.beginPath(); ctx.arc(888, 488, 7.5, 0, 6.2832); ctx.fill();
  ctx.fillStyle = '#331510';
  ctx.fillRect(884, 483, 4, 4);
  ctx.fillRect(882, 488, 2, 2);
})();
```
